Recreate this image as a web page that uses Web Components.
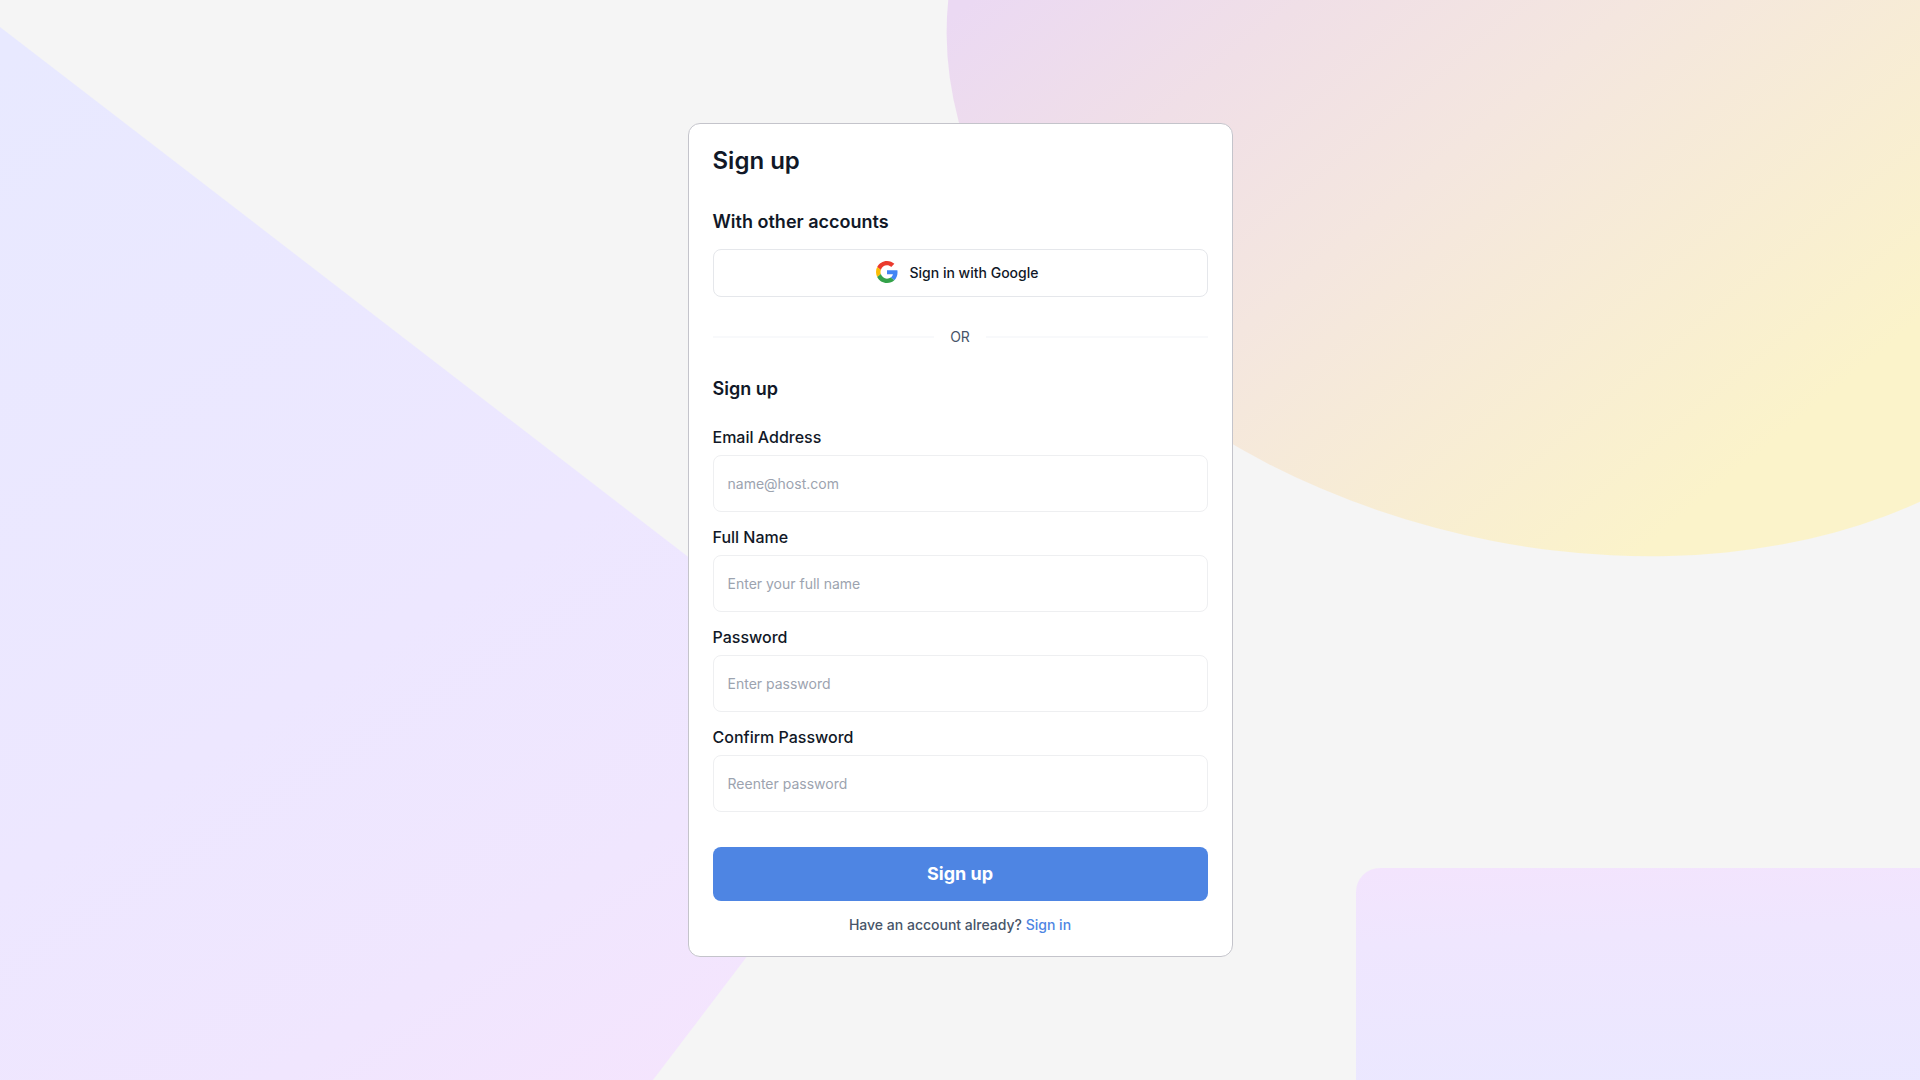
<!DOCTYPE html>
<html lang="en">
<head>
<meta charset="utf-8">
<meta name="viewport" content="width=device-width, initial-scale=1">
<title>Sign up</title>
<style>
  body {
    margin: 0;
    background: #f5f5f5;
    color: #111827;
    font-family: Inter, "Liberation Sans", sans-serif;
  }
</style>
</head>
<body>
<signup-page></signup-page>

<template id="signup-page">
  <style>
    :host {
      display: flex;
      align-items: center;
      justify-content: center;
      min-height: 100vh;
      box-sizing: border-box;
      padding: 24px;
    }
    h1, h2 { margin: 0; font-weight: 600; }
    h1 { font-size: 24px; line-height: 32px; }
    h2 { font-size: 18px; line-height: 28px; }
    section { display: flex; flex-direction: column; }
    .social { gap: 13px; margin: 31px 0 30px; }
    .credentials { gap: 22px; margin-top: 28px; }
    form { display: flex; flex-direction: column; gap: 35px; margin: 0; }
    .fields { display: flex; flex-direction: column; gap: 13px; }
    p {
      margin: 14px 0 0;
      color: #475569;
      font-size: 14px;
      font-weight: 500;
      line-height: 20px;
      text-align: center;
    }
    a { color: #4e85e3; text-decoration: none; }
  </style>
  <backdrop-shapes></backdrop-shapes>
  <auth-card>
    <h1>Sign up</h1>
    <section class="social">
      <h2>With other accounts</h2>
      <google-button>Sign in with Google</google-button>
    </section>
    <text-divider>OR</text-divider>
    <section class="credentials">
      <h2>Sign up</h2>
      <form>
        <div class="fields">
          <text-field label="Email Address" type="email" placeholder="name@host.com"></text-field>
          <text-field label="Full Name" type="text" placeholder="Enter your full name"></text-field>
          <text-field label="Password" type="password" placeholder="Enter password"></text-field>
          <text-field label="Confirm Password" type="password" placeholder="Reenter password"></text-field>
        </div>
        <primary-button>Sign up</primary-button>
      </form>
    </section>
    <p>Have an account already? <a href="#signin">Sign in</a></p>
  </auth-card>
</template>

<template id="backdrop-shapes">
  <style>
    :host { position: fixed; inset: 0; z-index: -1; overflow: hidden; }
    svg { display: block; width: 100%; height: 100%; }
  </style>
  <svg viewBox="0 0 1920 1080" preserveAspectRatio="xMidYMid slice" aria-hidden="true">
    <defs>
      <linearGradient id="slab" gradientUnits="userSpaceOnUse" x1="0" y1="60" x2="680" y2="1120">
        <stop offset="0" stop-color="#e8e9ff"/>
        <stop offset="0.55" stop-color="#ede7ff"/>
        <stop offset="0.8" stop-color="#f0e6fe"/>
        <stop offset="1" stop-color="#f5e4fd"/>
      </linearGradient>
      <linearGradient id="disc" gradientUnits="userSpaceOnUse" x1="947" y1="20" x2="1492" y2="676">
        <stop offset="0" stop-color="#ebd9f3"/>
        <stop offset="0.25" stop-color="#f0dfe7"/>
        <stop offset="0.5" stop-color="#f4e6df"/>
        <stop offset="1" stop-color="#fbf3ca"/>
      </linearGradient>
      <linearGradient id="tile" gradientUnits="userSpaceOnUse" x1="1600" y1="860" x2="1610" y2="1110">
        <stop offset="0" stop-color="#f3e4fd"/>
        <stop offset="0.3" stop-color="#efe6fe"/>
        <stop offset="1" stop-color="#eae8ff"/>
      </linearGradient>
    </defs>
    <path d="M0 27 917 733 653 1080H0Z" fill="url(#slab)"/>
    <path d="M957.8 -50.9A610 433 15 1 1 2136.2 264.9A610 433 15 1 1 957.8 -50.9Z" fill="url(#disc)"/>
    <rect x="1356" y="868" width="700" height="400" rx="24" fill="url(#tile)"/>
  </svg>
</template>

<template id="auth-card">
  <style>
    :host {
      display: block;
      box-sizing: border-box;
      width: 100%;
      max-width: 545px;
      padding: 21px 24px;
      border: 1px solid #c4c4cb;
      border-radius: 12px;
      background: #fff;
    }
  </style>
  <slot></slot>
</template>

<template id="google-button">
  <style>
    :host { display: block; }
    button {
      display: flex;
      align-items: center;
      justify-content: center;
      gap: 12px;
      width: 100%;
      height: 48px;
      padding: 0 6px 0 0;
      border: 1px solid #e5e7eb;
      border-radius: 8px;
      background: #fff;
      color: #111827;
      font: 500 14px/20px Inter, "Liberation Sans", sans-serif;
      cursor: pointer;
    }
    svg { display: block; width: 22px; height: 22px; margin-bottom: 2px; }
  </style>
  <button type="button">
    <svg viewBox="0 0 48 48" aria-hidden="true">
      <path fill="#ea3a2d" d="M24 9.5c3.54 0 6.71 1.22 9.21 3.6l6.85-6.85C35.9 2.38 30.47 0 24 0 14.62 0 6.51 5.38 2.56 13.22l7.98 6.19C12.43 13.72 17.74 9.5 24 9.5z"/>
      <path fill="#4285f4" d="M46.98 24.55c0-1.57-.15-3.09-.38-4.55H24v9.02h12.94c-.58 2.96-2.26 5.48-4.78 7.18l7.73 6c4.51-4.18 7.09-10.36 7.09-17.65z"/>
      <path fill="#fbbc05" d="M10.53 28.59c-.48-1.45-.76-2.99-.76-4.59s.27-3.14.76-4.59l-7.98-6.19C.92 16.46 0 20.12 0 24c0 3.88.92 7.54 2.56 10.78l7.97-6.19z"/>
      <path fill="#34a24a" d="M24 48c6.48 0 11.93-2.13 15.89-5.81l-7.73-6c-2.15 1.45-4.92 2.3-8.16 2.3-6.26 0-11.57-4.22-13.47-9.91l-7.98 6.19C6.51 42.62 14.62 48 24 48z"/>
    </svg>
    <span><slot></slot></span>
  </button>
</template>

<template id="text-divider">
  <style>
    :host {
      display: flex;
      align-items: center;
      gap: 16px;
      color: #475569;
      font-size: 14px;
      line-height: 20px;
    }
    :host::before, :host::after {
      content: "";
      flex: 1;
      height: 2px;
      background: #f8f9fb;
    }
  </style>
  <slot></slot>
</template>

<template id="text-field">
  <style>
    :host { display: flex; flex-direction: column; gap: 6px; }
    label { font-size: 16px; font-weight: 500; line-height: 24px; }
    input {
      box-sizing: border-box;
      width: 100%;
      height: 57px;
      margin: 0;
      padding: 0 14px;
      border: 1px solid #eeeff1;
      border-radius: 8px;
      background: #fff;
      color: #111827;
      font: 400 14px/20px Inter, "Liberation Sans", sans-serif;
    }
    input::placeholder { color: #9ca3af; opacity: 1; }
  </style>
  <label for="control"></label>
  <input id="control">
</template>

<template id="primary-button">
  <style>
    :host { display: block; }
    button {
      display: block;
      width: 100%;
      height: 54px;
      padding: 0;
      border: 0;
      border-radius: 8px;
      background: #4e85e3;
      color: #fff;
      font: 700 18px/28px Inter, "Liberation Sans", sans-serif;
      cursor: pointer;
    }
  </style>
  <button type="submit"><slot></slot></button>
</template>

<script>
  class TemplateElement extends HTMLElement {
    constructor() {
      super();
      const template = document.getElementById(this.localName);
      this.attachShadow({ mode: "open" }).append(template.content.cloneNode(true));
    }
  }

  class BackdropShapes extends TemplateElement {}
  class AuthCard extends TemplateElement {}
  class GoogleButton extends TemplateElement {}
  class TextDivider extends TemplateElement {}
  class PrimaryButton extends TemplateElement {}
  class SignupPage extends TemplateElement {}

  class TextField extends TemplateElement {
    connectedCallback() {
      const input = this.shadowRoot.querySelector("input");
      this.shadowRoot.querySelector("label").textContent = this.getAttribute("label");
      input.type = this.getAttribute("type") || "text";
      input.placeholder = this.getAttribute("placeholder") || "";
    }
  }

  customElements.define("backdrop-shapes", BackdropShapes);
  customElements.define("auth-card", AuthCard);
  customElements.define("google-button", GoogleButton);
  customElements.define("text-divider", TextDivider);
  customElements.define("text-field", TextField);
  customElements.define("primary-button", PrimaryButton);
  customElements.define("signup-page", SignupPage);
</script>
</body>
</html>
